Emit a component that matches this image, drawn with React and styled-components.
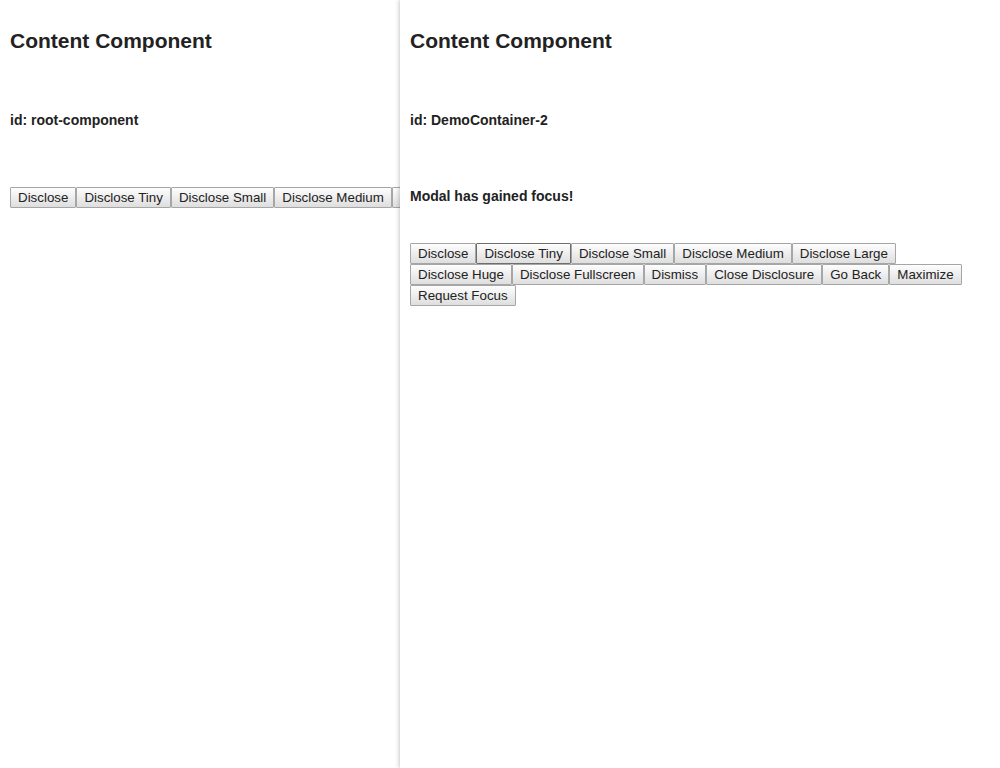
import React from "react";
import styled, { createGlobalStyle } from "styled-components";

const Global = createGlobalStyle`
  html, body { margin: 0; padding: 0; background: #fff; }
  body { font-family: "Liberation Sans", Arial, sans-serif; color: #222; }
`;

const Page = styled.div`
  display: flex;
  width: 1000px;
  height: 768px;
  overflow: hidden;
`;

const Panel = styled.section`
  position: relative;
  box-sizing: border-box;
  width: ${(p) => (p.$main ? "400px" : "600px")};
  height: 100%;
  padding: 0 10px;
  overflow: hidden;
  background: #fff;
  box-shadow: ${(p) => (p.$main ? "none" : "-1px 0 4px rgba(0,0,0,0.22)")};
  z-index: ${(p) => (p.$main ? 0 : 1)};
`;

const Title = styled.h2`
  margin: 29px 0 0;
  font-size: 21px;
  line-height: 24px;
  font-weight: bold;
  color: #222;
  white-space: nowrap;
`;

const Label = styled.p`
  margin: ${(p) => p.$top}px 0 0;
  font-size: 14px;
  line-height: 16px;
  font-weight: bold;
  color: #222;
  white-space: nowrap;
`;

const Buttons = styled.div`
  display: flex;
  flex-wrap: ${(p) => (p.$wrap ? "wrap" : "nowrap")};
  margin-top: ${(p) => p.$top}px;
`;

const Btn = styled.button`
  flex: none;
  box-sizing: border-box;
  height: 21px;
  margin: 0;
  padding: 1px 7px;
  font-family: "Liberation Sans", Arial, sans-serif;
  font-size: 13.3333px;
  line-height: 15px;
  color: #222;
  background: linear-gradient(#fdfdfd, #dedede);
  border: 1px solid ${(p) => (p.$focus ? "#6e6e6e" : "#a6a6a6")};
  border-radius: 1px;
  white-space: nowrap;
  cursor: pointer;
`;

const leftButtons = ["Disclose", "Disclose Tiny", "Disclose Small", "Disclose Medium", "Disclose Large"];
const rightButtons = [
  "Disclose",
  "Disclose Tiny",
  "Disclose Small",
  "Disclose Medium",
  "Disclose Large",
  "Disclose Huge",
  "Disclose Fullscreen",
  "Dismiss",
  "Close Disclosure",
  "Go Back",
  "Maximize",
  "Request Focus",
];

export default function App() {
  return (
    <Page>
      <Global />
      <Panel $main>
        <Title>Content Component</Title>
        <Label $top={59}>id: root-component</Label>
        <Buttons $top={59}>
          {leftButtons.map((b) => (
            <Btn key={b}>{b}</Btn>
          ))}
        </Buttons>
      </Panel>
      <Panel>
        <Title>Content Component</Title>
        <Label $top={59}>id: DemoContainer-2</Label>
        <Label $top={60}>Modal has gained focus!</Label>
        <Buttons $wrap $top={39}>
          {rightButtons.map((b) => (
            <Btn key={b} $focus={b === "Disclose Tiny"}>{b}</Btn>
          ))}
        </Buttons>
      </Panel>
    </Page>
  );
}
